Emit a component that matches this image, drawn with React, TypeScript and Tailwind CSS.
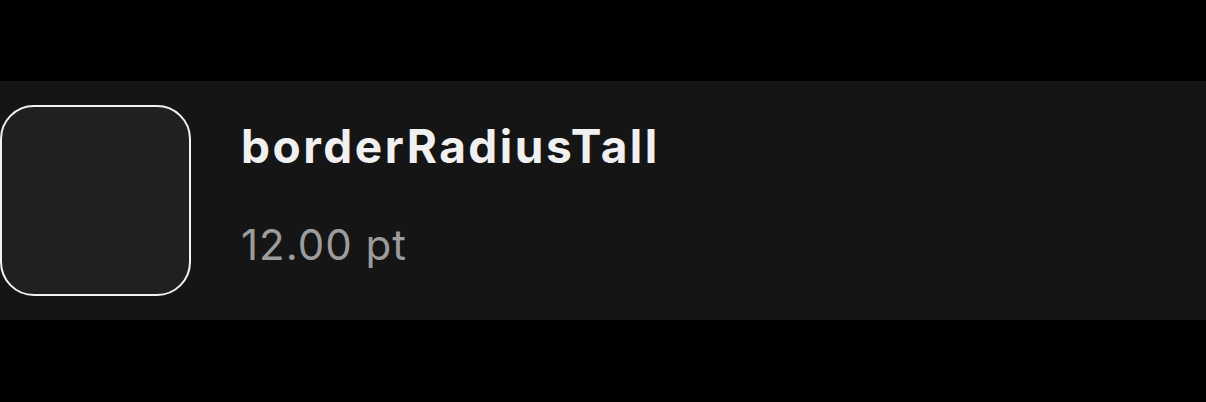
export default function App() {
  return (
    <div
      className="w-[1206px] h-[402px] bg-black pt-[81px]"
      style={{ fontFamily: "Inter, 'Noto Sans', sans-serif" }}
    >
      <div className="h-[239px] bg-[#151515] flex items-start">
        <div className="mt-[24px] w-[191px] h-[191px] shrink-0 rounded-[34px] border-2 border-[#f2f2f2] bg-[#202020]" />
        <div className="ml-[50px] mt-[40px] flex flex-col">
          <div className="text-[46px] leading-[50px] font-bold text-[#f0f0f0] tracking-[2.5px]">
            borderRadiusTall
          </div>
          <div className="mt-[49px] text-[42px] leading-[50px] text-[#9c9c9c] tracking-[1px]">
            12.00 pt
          </div>
        </div>
      </div>
    </div>
  );
}
